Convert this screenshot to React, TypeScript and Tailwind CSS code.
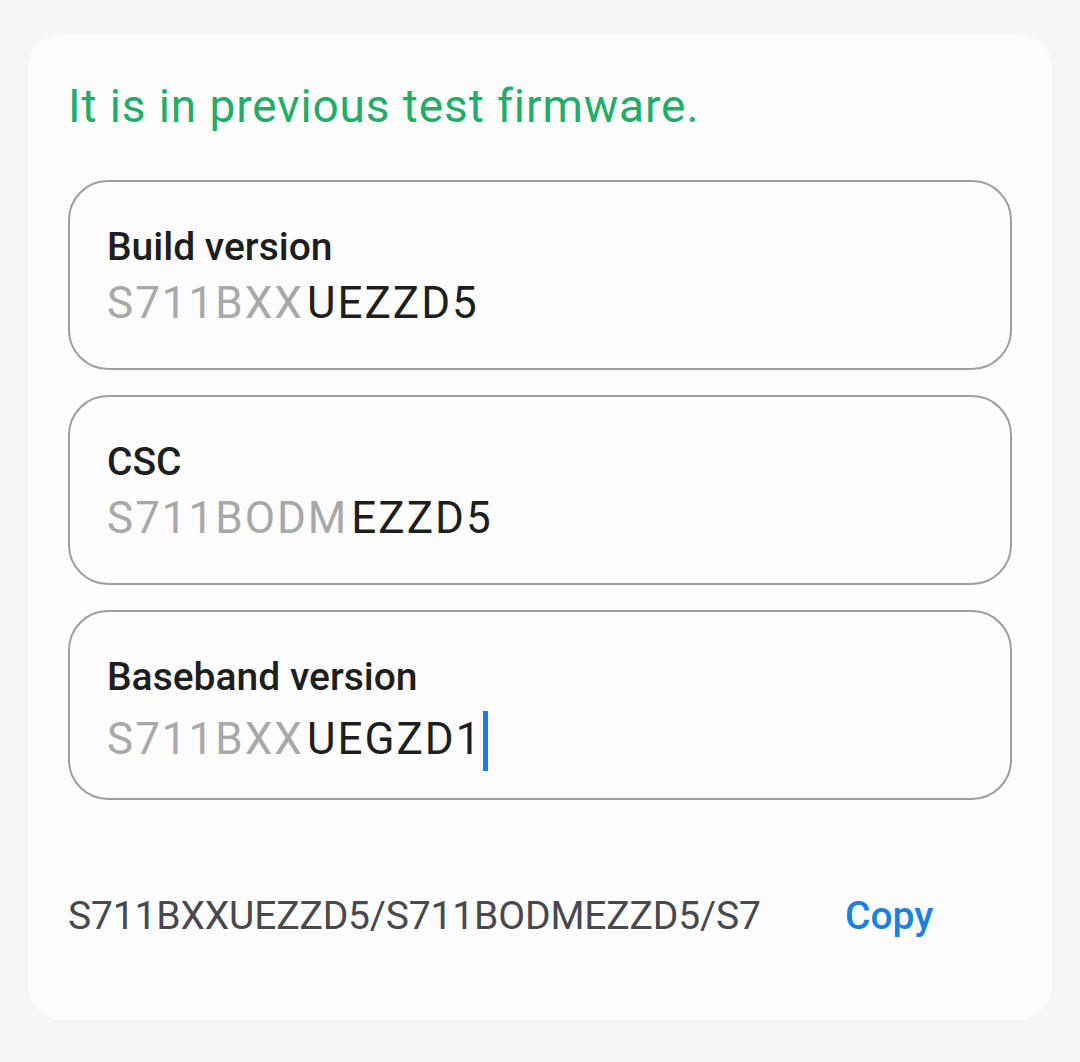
const FIELDS = [
  { label: 'Build version', prefix: 'S711BXX', rest: 'UEZZD5' },
  { label: 'CSC', prefix: 'S711BODM', rest: 'EZZD5' },
  { label: 'Baseband version', prefix: 'S711BXX', rest: 'UEGZD1', cursor: true },
];

function Field({ label, prefix, rest, cursor }: { label: string; prefix: string; rest: string; cursor?: boolean }) {
  return (
    <div className="h-[190px] rounded-[40px] border-2 border-[#9e9e9e] pl-[37px] pt-[42px]">
      <div className="text-[39px] leading-[46px] font-medium text-[#1e1e1e]">{label}</div>
      <div className="mt-[7px] flex items-center text-[44px] leading-[52px] tracking-[2px]">
        <span className="text-[#a8a8a8]">{prefix}</span>
        <span className="ml-[3px] text-[#1e1e1e]">{rest}</span>
        {cursor && <span className="ml-[1px] mt-[4px] h-[60px] w-[5px] bg-[#1a7fe0]" />}
      </div>
    </div>
  );
}

export default function App() {
  return (
    <div className="min-h-[1062px] bg-[#f6f6f6] px-[28px] pt-[34px] font-['Roboto',sans-serif]">
      <div className="h-[986px] rounded-[34px] bg-[#fcfcfc] px-[40px] pt-[45px]">
        <p className="text-[46px] leading-[54px] tracking-[0.9px] text-[#21ad68]">It is in previous test firmware.</p>
        <div className="mt-[47px] flex flex-col gap-[25px]">
          {FIELDS.map((f) => (
            <Field key={f.label} {...f} />
          ))}
        </div>
        <div className="mt-[93px] flex items-center">
          <span className="w-[777px] whitespace-nowrap text-[39px] leading-[46px] tracking-[-0.15px] text-[#48484d]">
            S711BXXUEZZD5/S711BODMEZZD5/S7
          </span>
          <span className="text-[39px] leading-[46px] font-medium text-[#1a80e2]">Copy</span>
        </div>
      </div>
    </div>
  );
}
